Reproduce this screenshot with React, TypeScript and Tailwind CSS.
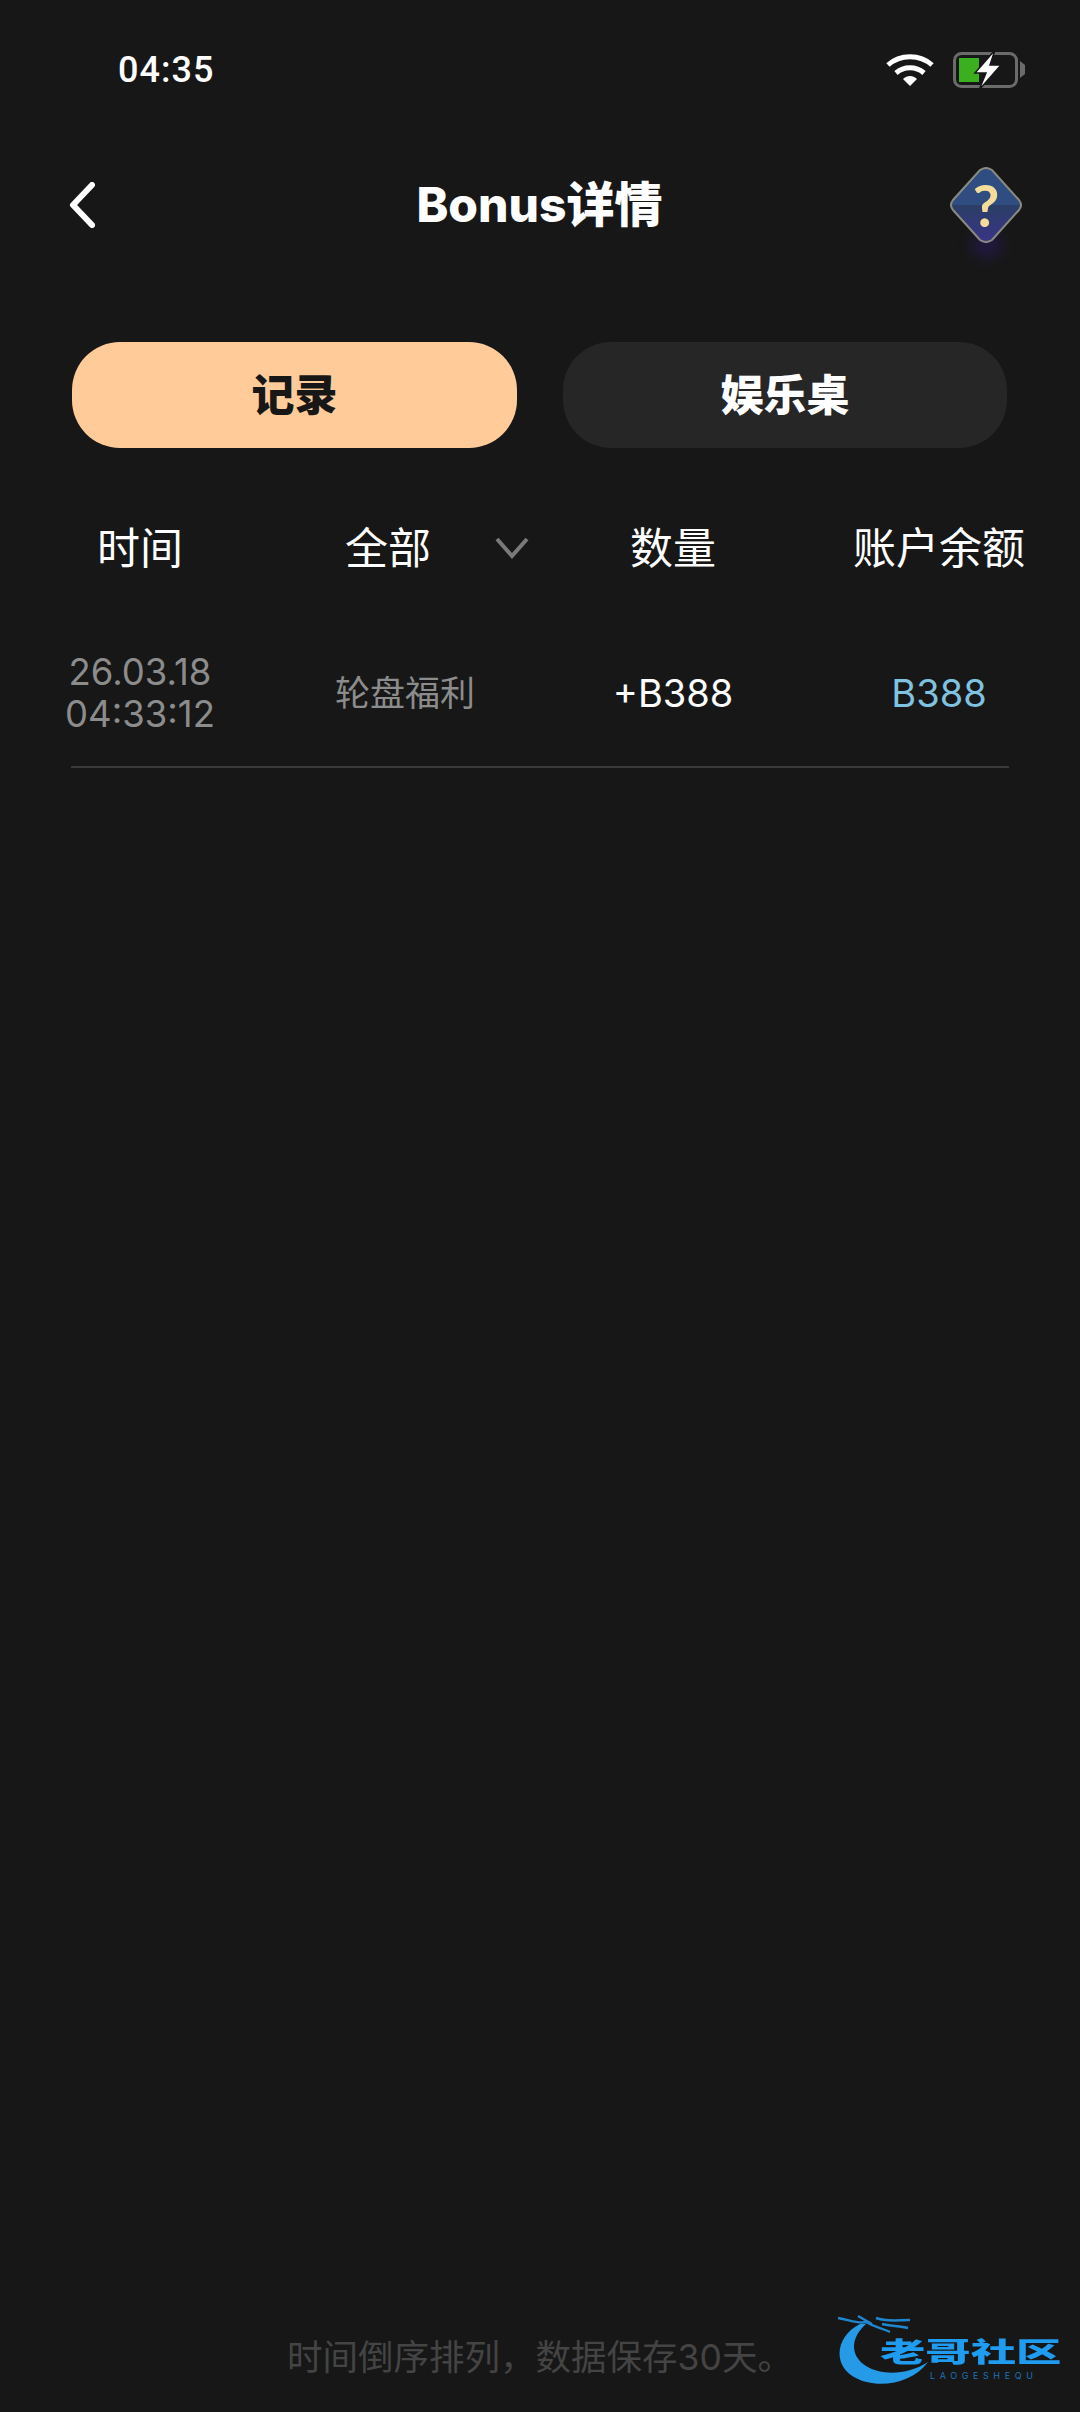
import React from 'react'

const sans = 'font-["Inter","Noto_Sans_CJK_SC",sans-serif]'

const StatusBar = () => (
   <div className="h-[140px] flex items-center justify-between pl-[118px] pr-[54px]">
      <span className='text-[36px] font-medium text-white font-["Roboto",sans-serif] tracking-[1px]'>04:35</span>
      <div className="flex items-center gap-[19px]">
         <svg width="48" height="34" viewBox="0 0 48 34" fill="none" stroke="white" strokeWidth="5">
            <path d="M2 12 C14 1 34 1 46 12" />
            <path d="M10 20 C18 13 30 13 38 20" />
            <path d="M17 26 L24 33 L31 26 C27 22 21 22 17 26 Z" fill="white" stroke="none" />
         </svg>
         <svg width="73" height="40" viewBox="0 0 73 40" fill="none">
            <rect x="1.5" y="3.5" width="62" height="33" rx="7" stroke="#6b6b6b" strokeWidth="3" />
            <rect x="6" y="8" width="20" height="24" fill="#3bb01f" />
            <path d="M68 11 L73 15 V24 L68 28 Z" fill="#6b6b6b" transform="translate(-1 0)" />
            <path d="M42 0 L22 23 H33 L26 40 L48 15 H37 Z" fill="white" stroke="#171717" strokeWidth="1.5" />
         </svg>
      </div>
   </div>
)

const HelpBadge = () => (
   <div className="relative w-[72px] h-[76px] flex items-center justify-center">
      <div className="absolute left-[22px] top-[66px] w-[30px] h-[24px] rounded-full bg-[#2a1a5e] opacity-60 blur-[7px]" />
      <svg className="absolute inset-0" width="72" height="76" viewBox="0 0 72 76">
         <defs>
            <linearGradient id="help" x1="0" y1="0" x2="0" y2="1">
               <stop offset="0" stopColor="#2f4d80" />
               <stop offset="0.5" stopColor="#2f4d80" />
               <stop offset="0.5" stopColor="#2a3e66" />
               <stop offset="1" stopColor="#3a3486" />
            </linearGradient>
         </defs>
         <path
            d="M30 3 Q36 -1 42 3 L69 33 Q73 38 69 43 L42 73 Q36 77 30 73 L3 43 Q-1 38 3 33 Z"
            fill="url(#help)"
            stroke="#8a8a80"
            strokeWidth="2"
         />
      </svg>
      <span className='relative text-[58px] leading-none font-bold text-[#f4dc9a] font-["Lato",sans-serif]'>?</span>
   </div>
)

const Logo = () => (
   <div className="absolute left-[820px] top-[2300px] w-[260px] h-[100px]">
      <svg className="absolute inset-0 blur-[0.6px]" width="260" height="100" viewBox="0 0 260 100">
         <path
            d="M40 24 C16 36 12 64 34 77 C56 90 92 84 108 62 C88 75 62 76 46 66 C30 56 30 38 46 24 Z"
            fill="#259be8"
         />
         <path
            d="M18 18 C30 20 38 24 46 22 C56 28 62 28 70 32 M38 16 L52 24 M56 18 C66 22 78 20 90 20 M62 24 C70 26 80 26 88 28"
            fill="none"
            stroke="#1f86cf"
            strokeWidth="2.5"
         />
      </svg>
      <span
         className='absolute left-[60px] top-[35px] origin-left scale-x-[1.68] text-[27px] leading-[32px] font-black text-[#1f9bf0] whitespace-nowrap blur-[0.4px] font-["Noto_Sans_CJK_SC",sans-serif]'
      >
         老哥社区
      </span>
      <span
         className='absolute left-[110px] top-[71px] text-[9px] leading-[10px] tracking-[4.6px] text-[#1b72b5] whitespace-nowrap font-["Inter",sans-serif]'
      >
         LAOGESHEQU
      </span>
   </div>
)

const App = () => {
   return (
      <div className={`relative w-[1080px] h-[2412px] bg-[#171717] flex flex-col overflow-hidden ${sans}`}>
         <StatusBar />

         {/* Header */}
         <div className="h-[130px] grid grid-cols-[1fr_auto_1fr] items-center pl-[67px] pr-[58px]">
            <svg width="28" height="46" viewBox="0 0 28 46" fill="none" stroke="white" strokeWidth="6" strokeLinecap="round" strokeLinejoin="round">
               <path d="M25 3 L6 23 L25 43" />
            </svg>
            <h1 className="text-[48px] font-extrabold text-white mr-[10px]">Bonus详情</h1>
            <div className="justify-self-end">
               <HelpBadge />
            </div>
         </div>

         {/* Tabs */}
         <div className="mt-[72px] px-[72px] flex gap-[46px]">
            <button className="w-[445px] h-[106px] rounded-[48px] bg-[#ffcc99] text-[43px] font-black text-[#171717]">记录</button>
            <button className="w-[444px] h-[106px] rounded-[48px] bg-[#262626] text-[43px] font-black text-white">娱乐桌</button>
         </div>

         {/* Table head */}
         <div className="mt-[68px] grid grid-cols-[280px_250px_286px_246px] items-center text-[43px] text-white text-center h-[64px]">
            <span>时间</span>
            <div className="flex items-center pl-[65px] gap-[64px]">
               <span>全部</span>
               <svg width="34" height="22" viewBox="0 0 34 22" fill="none" stroke="#7a7a7a" strokeWidth="4">
                  <path d="M2 2 L17 19 L32 2" />
               </svg>
            </div>
            <span>数量</span>
            <span>账户余额</span>
         </div>

         {/* Row */}
         <div className="mt-[69px] grid grid-cols-[280px_250px_286px_246px] items-center text-center h-[88px]">
            <div className="text-[36.5px] leading-[42px] text-[#8c8c8c]">
               <div>26.03.18</div>
               <div>04:33:12</div>
            </div>
            <span className="text-[35px] text-[#8c8c8c]">轮盘福利</span>
            <span className="text-[38px] text-white">+B388</span>
            <span className="text-[38px] text-[#7fc3e0]">B388</span>
         </div>
         <div className="mt-[29px] mx-[71px] h-[2px] bg-[#3a3a3a]" />

         {/* Footer note */}
         <div className="mt-auto pb-[32px] text-center text-[35.5px] leading-[44px] text-[#444444]">
            时间倒序排列，数据保存30天。
         </div>

         <Logo />
      </div>
   )
}

export default App
